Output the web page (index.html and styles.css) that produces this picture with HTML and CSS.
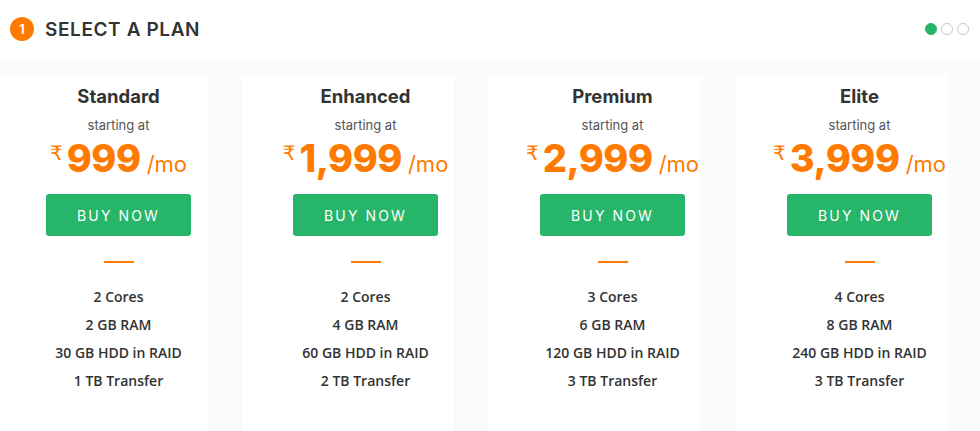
FILE: index.html
```html
<!DOCTYPE html>
<html>
<head>
<meta charset="utf-8">
<link rel="stylesheet" href="styles.css">
</head>
<body>
<header class="header">
  <div class="heading">
    <span class="step">1</span>
    <h1 class="title">SELECT A PLAN</h1>
  </div>
  <div class="dots">
    <span class="dot dot-active"></span>
    <span class="dot"></span>
    <span class="dot"></span>
  </div>
</header>
<section class="plans">
  <div class="card">
    <h2 class="name">Standard</h2>
    <div class="starting">starting at</div>
    <div class="price"><span class="rupee">₹</span><span class="amount">999</span><span class="per">/mo</span></div>
    <a class="buy">BUY NOW</a>
    <span class="rule"></span>
    <ul class="features">
      <li>2 Cores</li>
      <li>2 GB RAM</li>
      <li>30 GB HDD in RAID</li>
      <li>1 TB Transfer</li>
    </ul>
  </div>
  <div class="card">
    <h2 class="name">Enhanced</h2>
    <div class="starting">starting at</div>
    <div class="price"><span class="rupee">₹</span><span class="amount">1,999</span><span class="per">/mo</span></div>
    <a class="buy">BUY NOW</a>
    <span class="rule"></span>
    <ul class="features">
      <li>2 Cores</li>
      <li>4 GB RAM</li>
      <li>60 GB HDD in RAID</li>
      <li>2 TB Transfer</li>
    </ul>
  </div>
  <div class="card">
    <h2 class="name">Premium</h2>
    <div class="starting">starting at</div>
    <div class="price"><span class="rupee">₹</span><span class="amount">2,999</span><span class="per">/mo</span></div>
    <a class="buy">BUY NOW</a>
    <span class="rule"></span>
    <ul class="features">
      <li>3 Cores</li>
      <li>6 GB RAM</li>
      <li>120 GB HDD in RAID</li>
      <li>3 TB Transfer</li>
    </ul>
  </div>
  <div class="card">
    <h2 class="name">Elite</h2>
    <div class="starting">starting at</div>
    <div class="price"><span class="rupee">₹</span><span class="amount">3,999</span><span class="per">/mo</span></div>
    <a class="buy">BUY NOW</a>
    <span class="rule"></span>
    <ul class="features">
      <li>4 Cores</li>
      <li>8 GB RAM</li>
      <li>240 GB HDD in RAID</li>
      <li>3 TB Transfer</li>
    </ul>
  </div>
</section>
</body>
</html>
```
FILE: styles.css
```css
* { box-sizing: border-box; }
html, body { margin: 0; padding: 0; }
body {
  width: 980px;
  height: 431px;
  overflow: hidden;
  background: #fff;
  font-family: Inter, "Noto Sans", sans-serif;
  color: #333;
}
.header {
  height: 60px;
  display: flex;
  align-items: center;
  justify-content: space-between;
  padding: 0 10px 2px 10px;
}
.heading { display: flex; align-items: center; }
.step {
  width: 24px;
  height: 24px;
  border-radius: 50%;
  background: #ff7a00;
  color: #fff;
  font-size: 13px;
  font-weight: 600;
  display: flex;
  align-items: center;
  justify-content: center;
}
.title {
  margin: 0 0 0 11px;
  font-size: 19px;
  font-weight: 600;
  color: #333;
  letter-spacing: 0.6px;
}
.dots { display: flex; gap: 4px; padding-right: 1px; }
.dot {
  width: 12px;
  height: 12px;
  border-radius: 50%;
  border: 1px solid #c8c8c8;
}
.dot-active { background: #27b56a; border-color: #27b56a; }

.plans {
  height: 371px;
  background: #fbfbfb;
  padding-top: 16px;
  display: flex;
  margin-left: -5px;
}
.card {
  flex: none;
  width: 247px;
  background: linear-gradient(to right, #fff 212px, #fbfbfb 212px);
  display: flex;
  flex-direction: column;
  align-items: center;
}
.name {
  margin: 8px 0 0;
  font-size: 18.5px;
  line-height: 24px;
  font-weight: 700;
  color: #333;
}
.starting {
  margin-top: 8px;
  font-size: 13px;
  line-height: 18px;
  color: #555;
}
.price {
  display: flex;
  align-items: baseline;
  height: 58px;
  color: #ff7a00;
}
.rupee {
  font-family: "DejaVu Sans", sans-serif;
  font-size: 20px;
  align-self: flex-start;
  margin-top: 7px;
  margin-right: 4px;
}
.amount {
  font-size: 38px;
  line-height: 48px;
  font-weight: 800;
  letter-spacing: -0.5px;
}
.per {
  font-size: 22px;
  margin-left: 6px;
}
.buy {
  margin-top: 2px;
  width: 145px;
  height: 42px;
  border-radius: 3px;
  background: #27b56a;
  color: #fff;
  font-size: 14px;
  letter-spacing: 2.1px;
  display: flex;
  align-items: center;
  justify-content: center;
}
.rule {
  display: block;
  width: 30px;
  height: 2px;
  background: #ff7a00;
  margin-top: 25px;
}
.features {
  list-style: none;
  margin: 20px 0 0;
  padding: 0;
  text-align: center;
  font-family: "Open Sans", sans-serif;
  font-weight: 600;
  font-size: 14px;
  line-height: 28px;
  color: #333;
}
```
